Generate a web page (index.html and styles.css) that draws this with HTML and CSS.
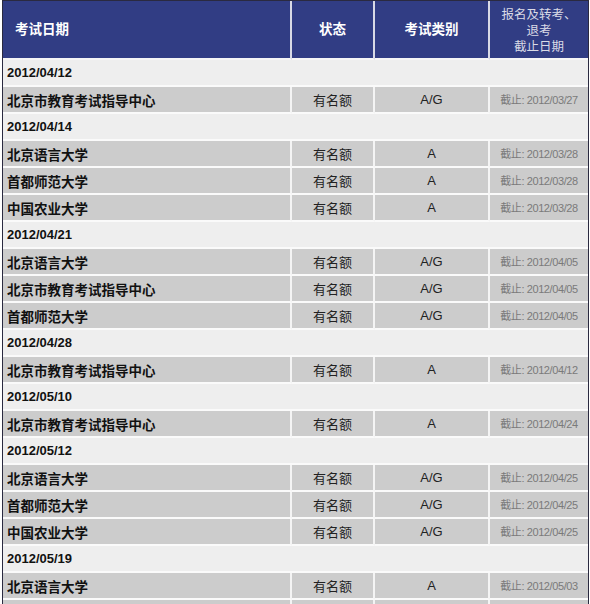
FILE: index.html
```html
<!DOCTYPE html>
<html lang="zh-CN">
<head>
<meta charset="utf-8">
<title>考试日期</title>
<link rel="stylesheet" href="styles.css">
</head>
<body>
<table class="exam">
  <colgroup>
    <col class="c1"><col class="c2"><col class="c3"><col class="c4">
  </colgroup>
  <thead>
    <tr>
      <th class="h-date">考试日期</th>
      <th>状态</th>
      <th>考试类别</th>
      <th class="h-dead">报名及转考、<br>退考<br>截止日期</th>
    </tr>
  </thead>
  <tbody>
    <tr class="date"><td colspan="4">2012/04/12</td></tr>
    <tr class="row"><td class="org">北京市教育考试指导中心</td><td class="st">有名额</td><td class="ty">A/G</td><td class="dl">截止: 2012/03/27</td></tr>
    <tr class="date"><td colspan="4">2012/04/14</td></tr>
    <tr class="row"><td class="org">北京语言大学</td><td class="st">有名额</td><td class="ty">A</td><td class="dl">截止: 2012/03/28</td></tr>
    <tr class="row"><td class="org">首都师范大学</td><td class="st">有名额</td><td class="ty">A</td><td class="dl">截止: 2012/03/28</td></tr>
    <tr class="row"><td class="org">中国农业大学</td><td class="st">有名额</td><td class="ty">A</td><td class="dl">截止: 2012/03/28</td></tr>
    <tr class="date"><td colspan="4">2012/04/21</td></tr>
    <tr class="row"><td class="org">北京语言大学</td><td class="st">有名额</td><td class="ty">A/G</td><td class="dl">截止: 2012/04/05</td></tr>
    <tr class="row"><td class="org">北京市教育考试指导中心</td><td class="st">有名额</td><td class="ty">A/G</td><td class="dl">截止: 2012/04/05</td></tr>
    <tr class="row"><td class="org">首都师范大学</td><td class="st">有名额</td><td class="ty">A/G</td><td class="dl">截止: 2012/04/05</td></tr>
    <tr class="date"><td colspan="4">2012/04/28</td></tr>
    <tr class="row"><td class="org">北京市教育考试指导中心</td><td class="st">有名额</td><td class="ty">A</td><td class="dl">截止: 2012/04/12</td></tr>
    <tr class="date"><td colspan="4">2012/05/10</td></tr>
    <tr class="row"><td class="org">北京市教育考试指导中心</td><td class="st">有名额</td><td class="ty">A</td><td class="dl">截止: 2012/04/24</td></tr>
    <tr class="date"><td colspan="4">2012/05/12</td></tr>
    <tr class="row"><td class="org">北京语言大学</td><td class="st">有名额</td><td class="ty">A/G</td><td class="dl">截止: 2012/04/25</td></tr>
    <tr class="row"><td class="org">首都师范大学</td><td class="st">有名额</td><td class="ty">A/G</td><td class="dl">截止: 2012/04/25</td></tr>
    <tr class="row"><td class="org">中国农业大学</td><td class="st">有名额</td><td class="ty">A/G</td><td class="dl">截止: 2012/04/25</td></tr>
    <tr class="date"><td colspan="4">2012/05/19</td></tr>
    <tr class="row"><td class="org">北京语言大学</td><td class="st">有名额</td><td class="ty">A</td><td class="dl">截止: 2012/05/03</td></tr>
    <tr class="row"><td class="org">首都师范大学</td><td class="st">有名额</td><td class="ty">A</td><td class="dl">截止: 2012/05/03</td></tr>
    <tr class="row"><td class="org">中国农业大学</td><td class="st">有名额</td><td class="ty">A</td><td class="dl">截止: 2012/05/03</td></tr>
  </tbody>
</table>
</body>
</html>
```
FILE: styles.css
```css
html, body {
  margin: 0;
  padding: 0;
  background: #ffffff;
}
body {
  padding-left: 2px;
  font-family: "Liberation Sans", "Noto Sans CJK SC", sans-serif;
}
.exam {
  width: 587px;
  border-collapse: separate;
  border-spacing: 0;
  table-layout: fixed;
  border: 1px solid #2a2a40;
  border-bottom: none;
}
.c1 { width: 289px; }
.c2 { width: 83px; }
.c3 { width: 115px; }
.c4 { width: 98px; }

.exam th {
  background: #313d84;
  color: #ffffff;
  height: 54px;
  padding: 0 0 3px 0;
  font-size: 13.5px;
  line-height: 18px;
  font-weight: bold;
  text-align: center;
  vertical-align: middle;
  border-right: 2px solid #d8dae6;
  border-bottom: 2px solid #f6f6f6;
  font-family: "Noto Sans CJK SC", sans-serif;
}
.exam th:last-child { border-right: none; }
.exam th.h-date {
  text-align: left;
  padding-left: 12px;
}
.exam th.h-dead {
  font-weight: normal;
  font-size: 12.5px;
  line-height: 16px;
  padding: 0;
  height: 57px;
  color: #dadbe6;
}

.exam td {
  height: 25px;
  padding: 0;
  line-height: 18px;
  border-bottom: 2px solid #fafafa;
  vertical-align: middle;
}
.date td {
  background: #eeeeee;
  padding-left: 4px;
  font-size: 13px;
  font-weight: bold;
  color: #111111;
}
.row td {
  background: #cccccc;
  border-right: 2px solid #f4f4f4;
}
.row td:last-child { border-right: none; }
.row .org {
  padding-left: 4px;
  font-family: "Noto Sans CJK SC", sans-serif;
  font-size: 13.5px;
  font-weight: bold;
  color: #111111;
  white-space: nowrap;
}
.row .st {
  text-align: center;
  font-family: "Noto Sans CJK SC", sans-serif;
  font-size: 13px;
  color: #222222;
}
.row .ty {
  text-align: center;
  font-size: 13px;
  color: #222222;
}
.row .dl {
  text-align: center;
  font-size: 11px;
  letter-spacing: -0.4px;
  color: #7a7a7a;
  white-space: nowrap;
}
```
